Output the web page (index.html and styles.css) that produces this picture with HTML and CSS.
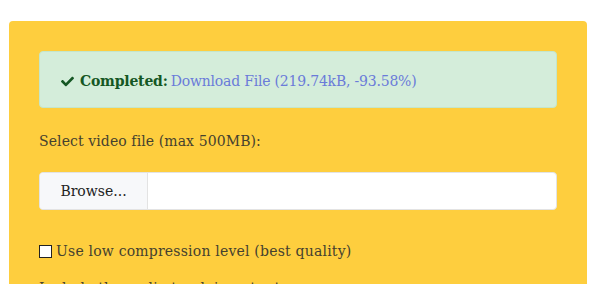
FILE: index.html
```html
<!DOCTYPE html>
<html>
<head>
<meta charset="utf-8">
<title>Compress video</title>
<link rel="stylesheet" href="styles.css">
</head>
<body>

<div class="panel">
	<div class="alert">
		<svg class="check" viewBox="0 0 512 512" width="15" height="13"><path d="M173.9 439.4l-166.4-166.4c-10-10-10-26.2 0-36.2l36.2-36.2c10-10 26.2-10 36.2 0L192 312.7 432.1 72.6c10-10 26.2-10 36.2 0l36.2 36.2c10 10 10 26.2 0 36.2L210.1 439.4c-10 10-26.2 10-36.2 0z" fill="#155724"/></svg>
		<strong>Completed:</strong>
		<a href="#">Download File (219.74kB, -93.58%)</a>
	</div>

	<label class="field-label">Select video file (max 500MB):</label>

	<div class="file-group">
		<span class="browse">Browse...</span>
		<span class="file-name"></span>
	</div>

	<label class="option"><span class="box"></span>Use low compression level (best quality)</label>
	<label class="option">Include the audio track in output</label>
</div>

</body>
</html>
```

FILE: styles.css
```css
html, body {
	margin: 0;
	padding: 0;
	background: #fff;
}

body {
	font-family: "DejaVu Serif", serif;
	font-size: 14px;
	color: #45412f;
}

.panel {
	box-sizing: border-box;
	width: 578px;
	height: 263px;
	margin: 21px 0 0 9px;
	padding: 30px 30px 0 30px;
	background: #fece3e;
	border-radius: 4px 4px 0 0;
	overflow: hidden;
}

.alert {
	box-sizing: border-box;
	height: 57px;
	display: flex;
	align-items: center;
	padding: 3px 20px 0 20px;
	background: #d4edda;
	border: 1px solid #c3e6cb;
	border-radius: 4px;
	color: #155724;
	white-space: nowrap;
}

.check {
	margin-right: 5px;
}

.alert strong {
	margin-right: 3px;
	letter-spacing: -0.2px;
}

.alert a {
	color: #6a7bd9;
	text-decoration: none;
	letter-spacing: -0.2px;
}

.field-label {
	display: block;
	margin-top: 22px;
	line-height: 22px;
	letter-spacing: 0.1px;
}

.file-group {
	box-sizing: border-box;
	display: flex;
	height: 38px;
	margin-top: 20px;
	background: #fff;
	border: 1px solid #e3e3e3;
	border-radius: 4px;
}

.browse {
	display: flex;
	align-items: center;
	justify-content: center;
	width: 107px;
	background: #f7f8fa;
	border-right: 1px solid #e3e3e3;
	border-radius: 4px 0 0 4px;
	color: #222;
}

.file-name {
	flex: 1;
}

.option {
	display: flex;
	align-items: center;
	margin-top: 31px;
	line-height: 20px;
	letter-spacing: 0.2px;
}

.option + .option {
	margin-top: 17px;
}

.box {
	box-sizing: border-box;
	width: 13px;
	height: 13px;
	margin-right: 4px;
	background: #fff;
	border: 1px solid #222;
}
```
